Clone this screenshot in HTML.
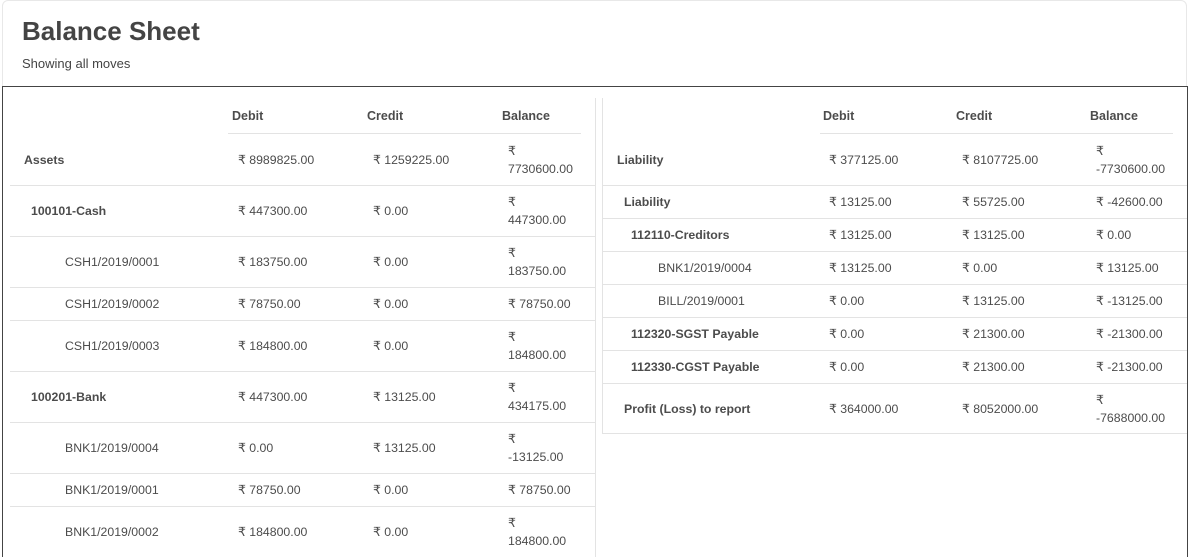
<!DOCTYPE html>
<html><head><meta charset="utf-8"><style>
*{margin:0;padding:0;box-sizing:border-box}
html,body{width:1189px;height:557px;overflow:hidden}
body{background:#fff;font-family:"Liberation Sans",sans-serif;color:#4c4c4c;font-size:12.3px;position:relative}
.card{position:absolute;left:2px;top:0;width:1185px;height:100px;border:1px solid #e8e8e8;border-radius:6px}
h1{position:absolute;left:22px;top:16px;font-size:26px;font-weight:bold;color:#444}
.sub{position:absolute;left:22px;top:56px;font-size:13px;color:#444}
.box{position:absolute;left:2px;top:86px;width:1186px;height:471px;border:1px solid #444;border-bottom:none;background:#fff}
.r{position:absolute;border-bottom:1px solid #e3e3e3}
.r span{position:absolute;top:50%;transform:translateY(-50%);line-height:18px;white-space:nowrap}
.b{font-weight:bold}
.h{font-weight:bold;top:109px;position:absolute;font-size:12.5px}
.vl{position:absolute;width:1px;background:#e3e3e3}
</style></head><body>
<div class="card"></div>
<h1>Balance Sheet</h1>
<div class="sub">Showing all moves</div>
<div class="box"></div>
<div class="vl" style="left:595px;top:98px;height:459px"></div>
<div class="vl" style="left:602px;top:98px;height:336px"></div>
<div class="r" style="left:602px;top:433px;width:585px;height:1px"></div>
<span class="h" style="left:232px">Debit</span><span class="h" style="left:367px">Credit</span><span class="h" style="left:502px">Balance</span>
<span class="h" style="left:823px">Debit</span><span class="h" style="left:956px">Credit</span><span class="h" style="left:1090px">Balance</span>
<div class="r" style="left:228px;top:133px;width:353px;height:1px"></div>
<div class="r" style="left:820px;top:133px;width:353px;height:1px"></div>

<div class="r" style="left:10px;top:134px;width:585px;height:52px"><span class="b" style="left:14px">Assets</span><span style="left:228px">₹ 8989825.00</span><span style="left:363px">₹ 1259225.00</span><span style="left:498px">₹<br>7730600.00</span></div>
<div class="r" style="left:10px;top:186px;width:585px;height:51px"><span class="b" style="left:21px">100101-Cash</span><span style="left:228px">₹ 447300.00</span><span style="left:363px">₹ 0.00</span><span style="left:498px">₹<br>447300.00</span></div>
<div class="r" style="left:10px;top:237px;width:585px;height:51px"><span style="left:55px">CSH1/2019/0001</span><span style="left:228px">₹ 183750.00</span><span style="left:363px">₹ 0.00</span><span style="left:498px">₹<br>183750.00</span></div>
<div class="r" style="left:10px;top:288px;width:585px;height:33px"><span style="left:55px">CSH1/2019/0002</span><span style="left:228px">₹ 78750.00</span><span style="left:363px">₹ 0.00</span><span style="left:498px">₹ 78750.00</span></div>
<div class="r" style="left:10px;top:321px;width:585px;height:51px"><span style="left:55px">CSH1/2019/0003</span><span style="left:228px">₹ 184800.00</span><span style="left:363px">₹ 0.00</span><span style="left:498px">₹<br>184800.00</span></div>
<div class="r" style="left:10px;top:372px;width:585px;height:51px"><span class="b" style="left:21px">100201-Bank</span><span style="left:228px">₹ 447300.00</span><span style="left:363px">₹ 13125.00</span><span style="left:498px">₹<br>434175.00</span></div>
<div class="r" style="left:10px;top:423px;width:585px;height:51px"><span style="left:55px">BNK1/2019/0004</span><span style="left:228px">₹ 0.00</span><span style="left:363px">₹ 13125.00</span><span style="left:498px">₹<br>-13125.00</span></div>
<div class="r" style="left:10px;top:474px;width:585px;height:33px"><span style="left:55px">BNK1/2019/0001</span><span style="left:228px">₹ 78750.00</span><span style="left:363px">₹ 0.00</span><span style="left:498px">₹ 78750.00</span></div>
<div class="r" style="left:10px;top:507px;width:585px;height:50px;border:none"><span style="left:55px">BNK1/2019/0002</span><span style="left:228px">₹ 184800.00</span><span style="left:363px">₹ 0.00</span><span style="left:498px">₹<br>184800.00</span></div>

<div class="r" style="left:603px;top:134px;width:584px;height:52px"><span class="b" style="left:14px">Liability</span><span style="left:226px">₹ 377125.00</span><span style="left:359px">₹ 8107725.00</span><span style="left:493px">₹<br>-7730600.00</span></div>
<div class="r" style="left:603px;top:186px;width:584px;height:33px"><span class="b" style="left:21px">Liability</span><span style="left:226px">₹ 13125.00</span><span style="left:359px">₹ 55725.00</span><span style="left:493px">₹ -42600.00</span></div>
<div class="r" style="left:603px;top:219px;width:584px;height:33px"><span class="b" style="left:28px">112110-Creditors</span><span style="left:226px">₹ 13125.00</span><span style="left:359px">₹ 13125.00</span><span style="left:493px">₹ 0.00</span></div>
<div class="r" style="left:603px;top:252px;width:584px;height:33px"><span style="left:55px">BNK1/2019/0004</span><span style="left:226px">₹ 13125.00</span><span style="left:359px">₹ 0.00</span><span style="left:493px">₹ 13125.00</span></div>
<div class="r" style="left:603px;top:285px;width:584px;height:33px"><span style="left:55px">BILL/2019/0001</span><span style="left:226px">₹ 0.00</span><span style="left:359px">₹ 13125.00</span><span style="left:493px">₹ -13125.00</span></div>
<div class="r" style="left:603px;top:318px;width:584px;height:33px"><span class="b" style="left:28px">112320-SGST Payable</span><span style="left:226px">₹ 0.00</span><span style="left:359px">₹ 21300.00</span><span style="left:493px">₹ -21300.00</span></div>
<div class="r" style="left:603px;top:351px;width:584px;height:33px"><span class="b" style="left:28px">112330-CGST Payable</span><span style="left:226px">₹ 0.00</span><span style="left:359px">₹ 21300.00</span><span style="left:493px">₹ -21300.00</span></div>
<div class="r" style="left:603px;top:384px;width:584px;height:50px;border:none"><span class="b" style="left:21px">Profit (Loss) to report</span><span style="left:226px">₹ 364000.00</span><span style="left:359px">₹ 8052000.00</span><span style="left:493px">₹<br>-7688000.00</span></div>
</body></html>
